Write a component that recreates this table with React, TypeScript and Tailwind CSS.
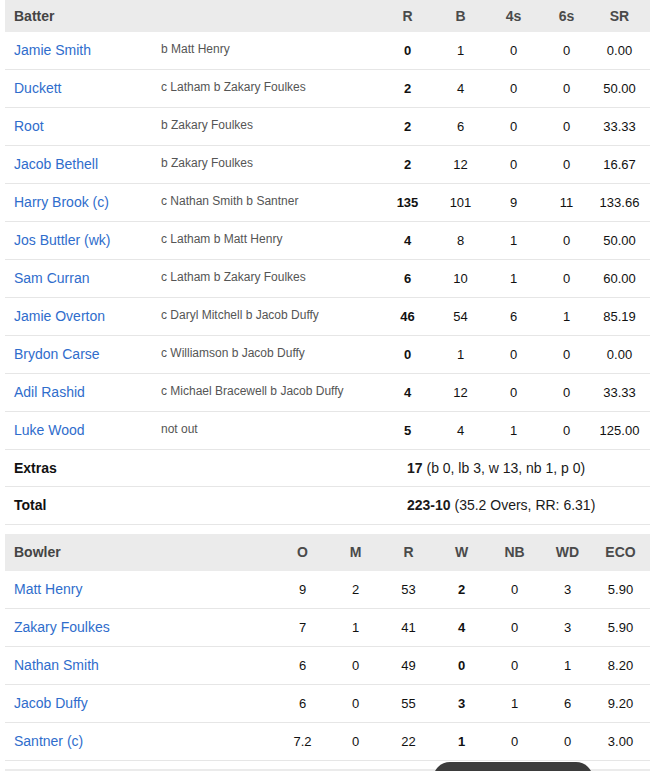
import React from "react";

type Bat = { name: string; how: string; r: string; b: string; f: string; s: string; sr: string };
type Bowl = { name: string; o: string; m: string; r: string; w: string; nb: string; wd: string; eco: string };

const BATTERS: Bat[] = [
  { name: "Jamie Smith", how: "b Matt Henry", r: "0", b: "1", f: "0", s: "0", sr: "0.00" },
  { name: "Duckett", how: "c Latham b Zakary Foulkes", r: "2", b: "4", f: "0", s: "0", sr: "50.00" },
  { name: "Root", how: "b Zakary Foulkes", r: "2", b: "6", f: "0", s: "0", sr: "33.33" },
  { name: "Jacob Bethell", how: "b Zakary Foulkes", r: "2", b: "12", f: "0", s: "0", sr: "16.67" },
  { name: "Harry Brook (c)", how: "c Nathan Smith b Santner", r: "135", b: "101", f: "9", s: "11", sr: "133.66" },
  { name: "Jos Buttler (wk)", how: "c Latham b Matt Henry", r: "4", b: "8", f: "1", s: "0", sr: "50.00" },
  { name: "Sam Curran", how: "c Latham b Zakary Foulkes", r: "6", b: "10", f: "1", s: "0", sr: "60.00" },
  { name: "Jamie Overton", how: "c Daryl Mitchell b Jacob Duffy", r: "46", b: "54", f: "6", s: "1", sr: "85.19" },
  { name: "Brydon Carse", how: "c Williamson b Jacob Duffy", r: "0", b: "1", f: "0", s: "0", sr: "0.00" },
  { name: "Adil Rashid", how: "c Michael Bracewell b Jacob Duffy", r: "4", b: "12", f: "0", s: "0", sr: "33.33" },
  { name: "Luke Wood", how: "not out", r: "5", b: "4", f: "1", s: "0", sr: "125.00" },
];

const BOWLERS: Bowl[] = [
  { name: "Matt Henry", o: "9", m: "2", r: "53", w: "2", nb: "0", wd: "3", eco: "5.90" },
  { name: "Zakary Foulkes", o: "7", m: "1", r: "41", w: "4", nb: "0", wd: "3", eco: "5.90" },
  { name: "Nathan Smith", o: "6", m: "0", r: "49", w: "0", nb: "0", wd: "1", eco: "8.20" },
  { name: "Jacob Duffy", o: "6", m: "0", r: "55", w: "3", nb: "1", wd: "6", eco: "9.20" },
  { name: "Santner (c)", o: "7.2", m: "0", r: "22", w: "1", nb: "0", wd: "0", eco: "3.00" },
];

const batGrid = "grid grid-cols-[151px_225px_repeat(5,53px)] items-center";
const bowlGrid = "grid grid-cols-[271px_repeat(7,53px)] items-center";
const num = "text-center text-[13px] text-[#111]";
const head = "text-center text-[14px] font-bold text-[#4a4a4a]";
const nameCls = "pl-[9px] text-[14px] text-[#2f6dcc] truncate";

export default function App() {
  return (
    <div className="relative h-[771px] w-[650px] overflow-hidden bg-white pl-[5px] font-['Liberation_Sans',Arial,sans-serif]">
      {/* batting */}
      <div className={`${batGrid} h-[32px] bg-[#ebebeb]`}>
        <div className="pl-[9px] text-[14px] font-bold text-[#444]">Batter</div>
        <div />
        <div className={head}>R</div>
        <div className={head}>B</div>
        <div className={head}>4s</div>
        <div className={head}>6s</div>
        <div className={head}>SR</div>
      </div>
      {BATTERS.map((p) => (
        <div key={p.name} className={`${batGrid} h-[38px] border-b border-[#e6e6e6]`}>
          <div className={nameCls}>{p.name}</div>
          <div className="truncate pb-[4px] pl-[5px] text-[12px] text-[#555]">{p.how}</div>
          <div className={`${num} font-bold`}>{p.r}</div>
          <div className={num}>{p.b}</div>
          <div className={num}>{p.f}</div>
          <div className={num}>{p.s}</div>
          <div className={num}>{p.sr}</div>
        </div>
      ))}
      <div className="grid h-[37px] grid-cols-[376px_1fr] items-center border-b border-[#e6e6e6]">
        <div className="pl-[9px] text-[14px] font-bold text-[#111]">Extras</div>
        <div className="pl-[26px] text-[14px] text-[#1a1a1a]">
          <span className="font-bold">17</span> (b 0, lb 3, w 13, nb 1, p 0)
        </div>
      </div>
      <div className="grid h-[38px] grid-cols-[376px_1fr] items-center border-b border-[#e6e6e6]">
        <div className="pl-[9px] text-[14px] font-bold text-[#111]">Total</div>
        <div className="pl-[26px] text-[14px] text-[#1a1a1a]">
          <span className="font-bold">223-10</span> (35.2 Overs, RR: 6.31)
        </div>
      </div>

      {/* bowling */}
      <div className={`${bowlGrid} mt-[9px] h-[37px] bg-[#ebebeb]`}>
        <div className="pl-[9px] text-[14px] font-bold text-[#444]">Bowler</div>
        <div className={head}>O</div>
        <div className={head}>M</div>
        <div className={head}>R</div>
        <div className={head}>W</div>
        <div className={head}>NB</div>
        <div className={head}>WD</div>
        <div className={head}>ECO</div>
      </div>
      {BOWLERS.map((p) => (
        <div key={p.name} className={`${bowlGrid} h-[38px] border-b border-[#e6e6e6]`}>
          <div className={nameCls}>{p.name}</div>
          <div className={num}>{p.o}</div>
          <div className={num}>{p.m}</div>
          <div className={num}>{p.r}</div>
          <div className={`${num} font-bold`}>{p.w}</div>
          <div className={num}>{p.nb}</div>
          <div className={num}>{p.wd}</div>
          <div className={num}>{p.eco}</div>
        </div>
      ))}
      <div className="mt-[8px] h-[20px] bg-[#ebebeb]" />

      {/* floating pill */}
      <div className="absolute left-[433px] top-[762px] h-[34px] w-[160px] rounded-[18px] bg-[#3b3b3b]" />
    </div>
  );
}
